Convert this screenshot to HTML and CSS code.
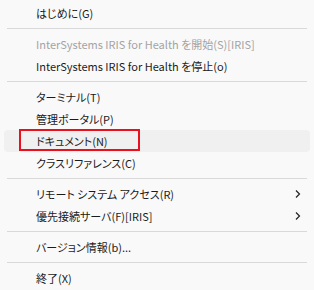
FILE: index.html
```html
<!DOCTYPE html>
<html lang="ja">
<head>
<meta charset="utf-8">
<link rel="stylesheet" href="styles.css">
</head>
<body>
<div class="menu">
  <div class="item">はじめに(G)</div>
  <div class="sep"></div>
  <div class="item disabled">InterSystems IRIS for Health を開始(S)[IRIS]</div>
  <div class="item">InterSystems IRIS for Health を停止(o)</div>
  <div class="sep"></div>
  <div class="item">ターミナル(T)</div>
  <div class="item">管理ポータル(P)</div>
  <div class="item hover"><span class="mark"></span>ドキュメント(N)</div>
  <div class="item">クラスリファレンス(C)</div>
  <div class="sep"></div>
  <div class="item sub">リモート システム アクセス(R)<svg class="chev" width="8" height="10" viewBox="0 0 8 10"><path d="M2 1.5 L5.5 5 L2 8.5" fill="none" stroke="#222" stroke-width="1.2"/></svg></div>
  <div class="item sub">優先接続サーバ(F)[IRIS]<svg class="chev" width="8" height="10" viewBox="0 0 8 10"><path d="M2 1.5 L5.5 5 L2 8.5" fill="none" stroke="#222" stroke-width="1.2"/></svg></div>
  <div class="sep"></div>
  <div class="item">バージョン情報(b)...</div>
  <div class="sep"></div>
  <div class="item">終了(X)</div>
</div>
</body>
</html>
```
FILE: styles.css
```css
html, body {
  margin: 0;
  padding: 0;
  background: #f9f9f9;
}
.menu {
  padding-top: 2px;
  font-family: "Noto Sans CJK JP", "Noto Sans", sans-serif;
  font-size: 11px;
  font-feature-settings: "palt";
  color: #1b1b1b;
}
.item {
  position: relative;
  height: 22px;
  line-height: 22px;
  margin: 0 4px;
  padding-left: 32px;
  border-radius: 4px;
  white-space: nowrap;
}
.disabled {
  color: #a3a3a3;
}
.hover {
  background: #f0f0f0;
}
.mark {
  position: absolute;
  left: 15px;
  top: -1px;
  width: 117px;
  height: 18px;
  border: 2px solid #e8111d;
}
.sub .chev {
  position: absolute;
  right: 8px;
  top: 6px;
}
.sep {
  height: 9px;
  display: flex;
  align-items: center;
  padding: 0 7px;
}
.sep::before {
  content: "";
  display: block;
  flex: 1;
  height: 1px;
  background: #d9d9d9;
}
```
